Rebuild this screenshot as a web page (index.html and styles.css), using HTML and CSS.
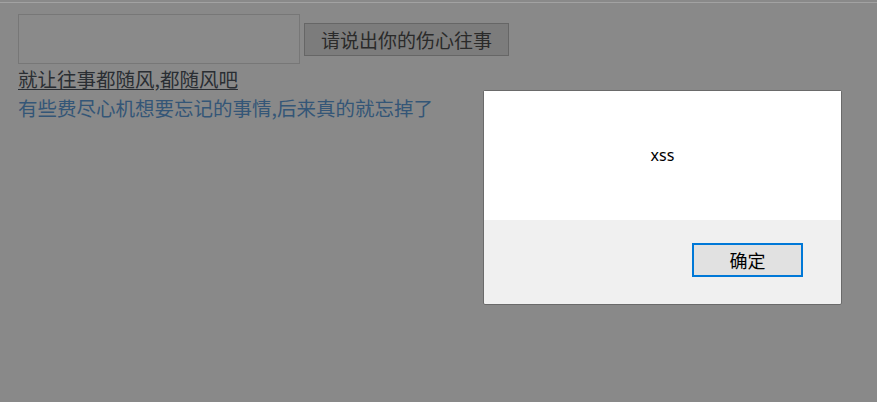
FILE: index.html
```html
<!DOCTYPE html>
<html lang="zh">
<head>
<meta charset="utf-8">
<title>xss</title>
<link rel="stylesheet" href="styles.css">
</head>
<body>
<div class="topline"></div>
<main class="page">
  <form class="row">
    <input class="field" type="text">
    <button class="submit" type="button">请说出你的伤心往事</button>
  </form>
  <a class="link" href="#">就让往事都随风,都随风吧</a>
  <p class="note">有些费尽心机想要忘记的事情,后来真的就忘掉了</p>
</main>
<div class="dialog">
  <div class="dialog-body">xss</div>
  <div class="dialog-foot">
    <button class="ok" type="button">确定</button>
  </div>
</div>
</body>
</html>
```

FILE: styles.css
```css
html, body {
  margin: 0;
  padding: 0;
  background: #898989;
  height: 100%;
  overflow: hidden;
  font-family: "Noto Sans CJK SC", "Noto Sans", sans-serif;
}
.topline {
  height: 1px;
  margin-top: 2px;
  background: #a2a2a2;
}
.page {
  padding: 11px 18px 0;
}
.row {
  display: flex;
  align-items: center;
  gap: 4px;
  margin: 0;
}
.field {
  box-sizing: border-box;
  width: 282px;
  height: 50px;
  margin: 0;
  background: #8a8a8a;
  border: 1px solid #777;
  outline: none;
}
.submit {
  box-sizing: border-box;
  width: 205px;
  height: 33px;
  margin: 0;
  padding: 0;
  background: #7c7c7c;
  border: 1px solid #666;
  color: #2a2a2a;
  font-family: "Noto Sans CJK SC", sans-serif;
  font-size: 19px;
  line-height: 31px;
}
.link {
  display: block;
  width: max-content;
  color: #2a2e33;
  font-size: 19.5px;
  line-height: 29px;
  text-decoration: underline;
  text-underline-offset: 2px;
}
.note {
  margin: 0;
  color: #345677;
  font-size: 19.5px;
  line-height: 29px;
}
.dialog {
  position: absolute;
  left: 483px;
  top: 90px;
  width: 357px;
  height: 213px;
  border: 1px solid #6a6a6a;
  border-radius: 2px;
  background: #f0f0f0;
  display: flex;
  flex-direction: column;
}
.dialog-body {
  height: 129px;
  background: #fff;
  display: flex;
  align-items: center;
  justify-content: center;
  font-family: "Noto Sans", sans-serif;
  font-size: 16px;
  color: #000;
  padding-bottom: 2px;
  box-sizing: border-box;
}
.dialog-foot {
  flex: 1;
  display: flex;
  justify-content: flex-end;
  align-items: flex-start;
  padding: 23px 38px 0 0;
}
.ok {
  box-sizing: border-box;
  width: 111px;
  height: 34px;
  margin: 0;
  padding: 0;
  background: #e1e1e1;
  border: 2px solid #0078d7;
  color: #000;
  font-family: "Noto Sans CJK SC", sans-serif;
  font-size: 18px;
  line-height: 30px;
}
```
